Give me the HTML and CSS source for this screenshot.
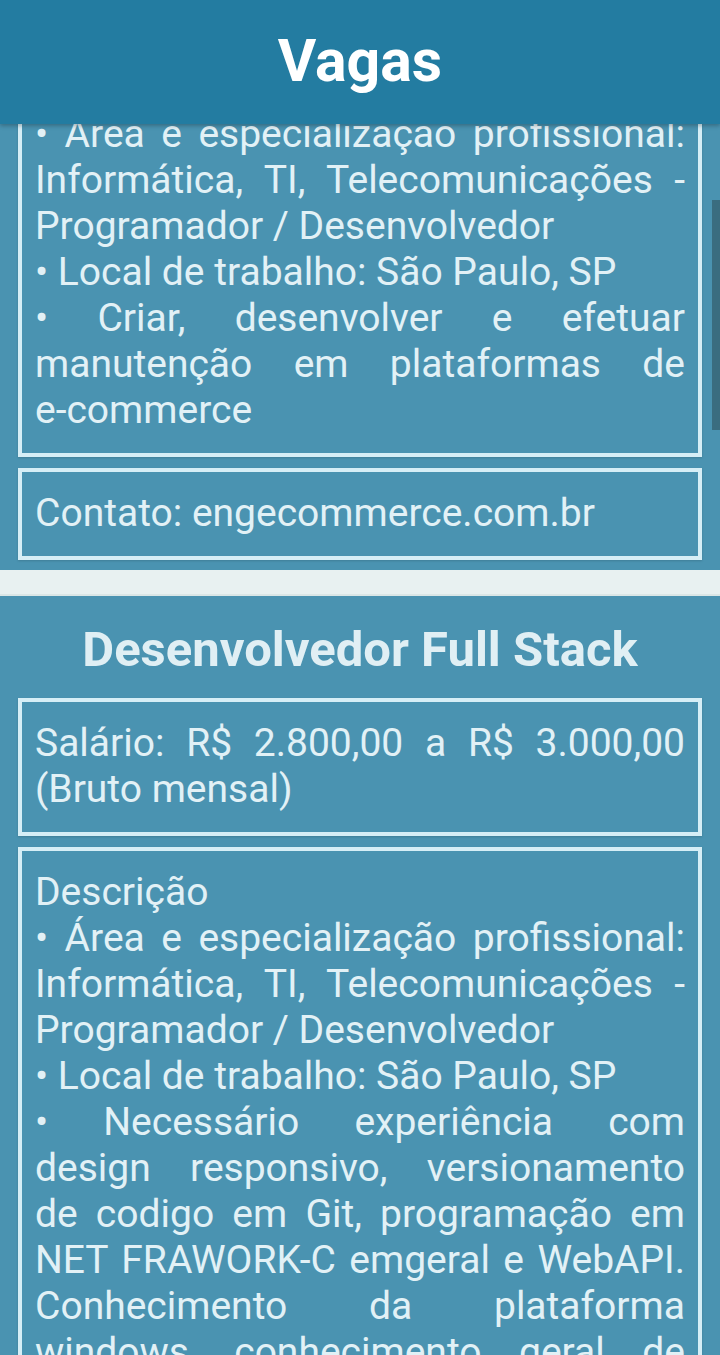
FILE: index.html
```html
<!DOCTYPE html>
<html lang="pt-BR">
<head>
<meta charset="utf-8">
<title>Vagas</title>
<link rel="stylesheet" href="styles.css">
</head>
<body>
<header class="topbar"><h1 class="topbar-title">Vagas</h1></header>
<main class="list">
  <section class="job job-first">
    <div class="card">
      <p class="card-text">Descrição<br>• Área e especialização profissional: Informática, TI, Telecomunicações - Programador / Desenvolvedor<br>• Local de trabalho: São Paulo, SP<br>• Criar, desenvolver e efetuar manutenção em plataformas de <span class="nowrap">e-commerce</span></p>
    </div>
    <div class="card">
      <p class="card-text">Contato: engecommerce.com.br</p>
    </div>
  </section>
  <div class="divider"></div>
  <section class="job">
    <h2 class="job-title">Desenvolvedor Full Stack</h2>
    <div class="card">
      <p class="card-text">Salário: R$ 2.800,00 a R$ 3.000,00 (Bruto mensal)</p>
    </div>
    <div class="card">
      <p class="card-text">Descrição<br>• Área e especialização profissional: Informática, TI, Telecomunicações - Programador / Desenvolvedor<br>• Local de trabalho: São Paulo, SP<br>• Necessário experiência com <span class="nowrap">design responsivo,</span> versionamento <span class="nowrap">de codigo</span> em Git, programação em NET FRAWORK-C emgeral e WebAPI. Conhecimento da plataforma windows, conhecimento geral de banco de dados SQL Server.</p>
    </div>
  </section>
</main>
<div class="scrollbar"></div>
</body>
</html>
```

FILE: styles.css
```css
html, body {
  margin: 0;
  padding: 0;
}
body {
  background: #4a93b1;
  font-family: Roboto, "Liberation Sans", sans-serif;
  color: #e2f1f6;
  overflow: hidden;
  height: 1355px;
}
.topbar {
  position: fixed;
  top: 0;
  left: 0;
  right: 0;
  height: 124px;
  background: #237ca1;
  box-shadow: 0 2px 4px rgba(0, 0, 0, 0.25);
  display: flex;
  align-items: center;
  justify-content: center;
  z-index: 2;
}
.topbar-title {
  margin: 0 0 4px;
  font-size: 59px;
  font-weight: 700;
  color: #ffffff;
  line-height: 1;
}
.list {
  display: flex;
  flex-direction: column;
}
.job {
  display: flex;
  flex-direction: column;
  gap: 11px;
  padding: 24px 18px 10px;
}
.job-first {
  padding-top: 43px;
}
.job-title {
  margin: 0 0 7px;
  text-align: center;
  font-size: 49px;
  font-weight: 700;
  line-height: 60px;
  color: #e0eff4;
}
.card {
  border: 4px solid #d6eef6;
  padding: 18px 13px 20px;
  box-shadow: 0 1px 2px rgba(0, 0, 0, 0.15);
}
.card-text {
  margin: 0;
  font-size: 39px;
  line-height: 46px;
  text-align: justify;
}
.nowrap {
  white-space: nowrap;
}
.divider {
  height: 24px;
  background: #e8f1f1;
  border-bottom: 2px solid #dae6e6;
}
.scrollbar {
  position: fixed;
  top: 200px;
  right: 0;
  width: 8px;
  height: 230px;
  background: #3a6d80;
}
```
